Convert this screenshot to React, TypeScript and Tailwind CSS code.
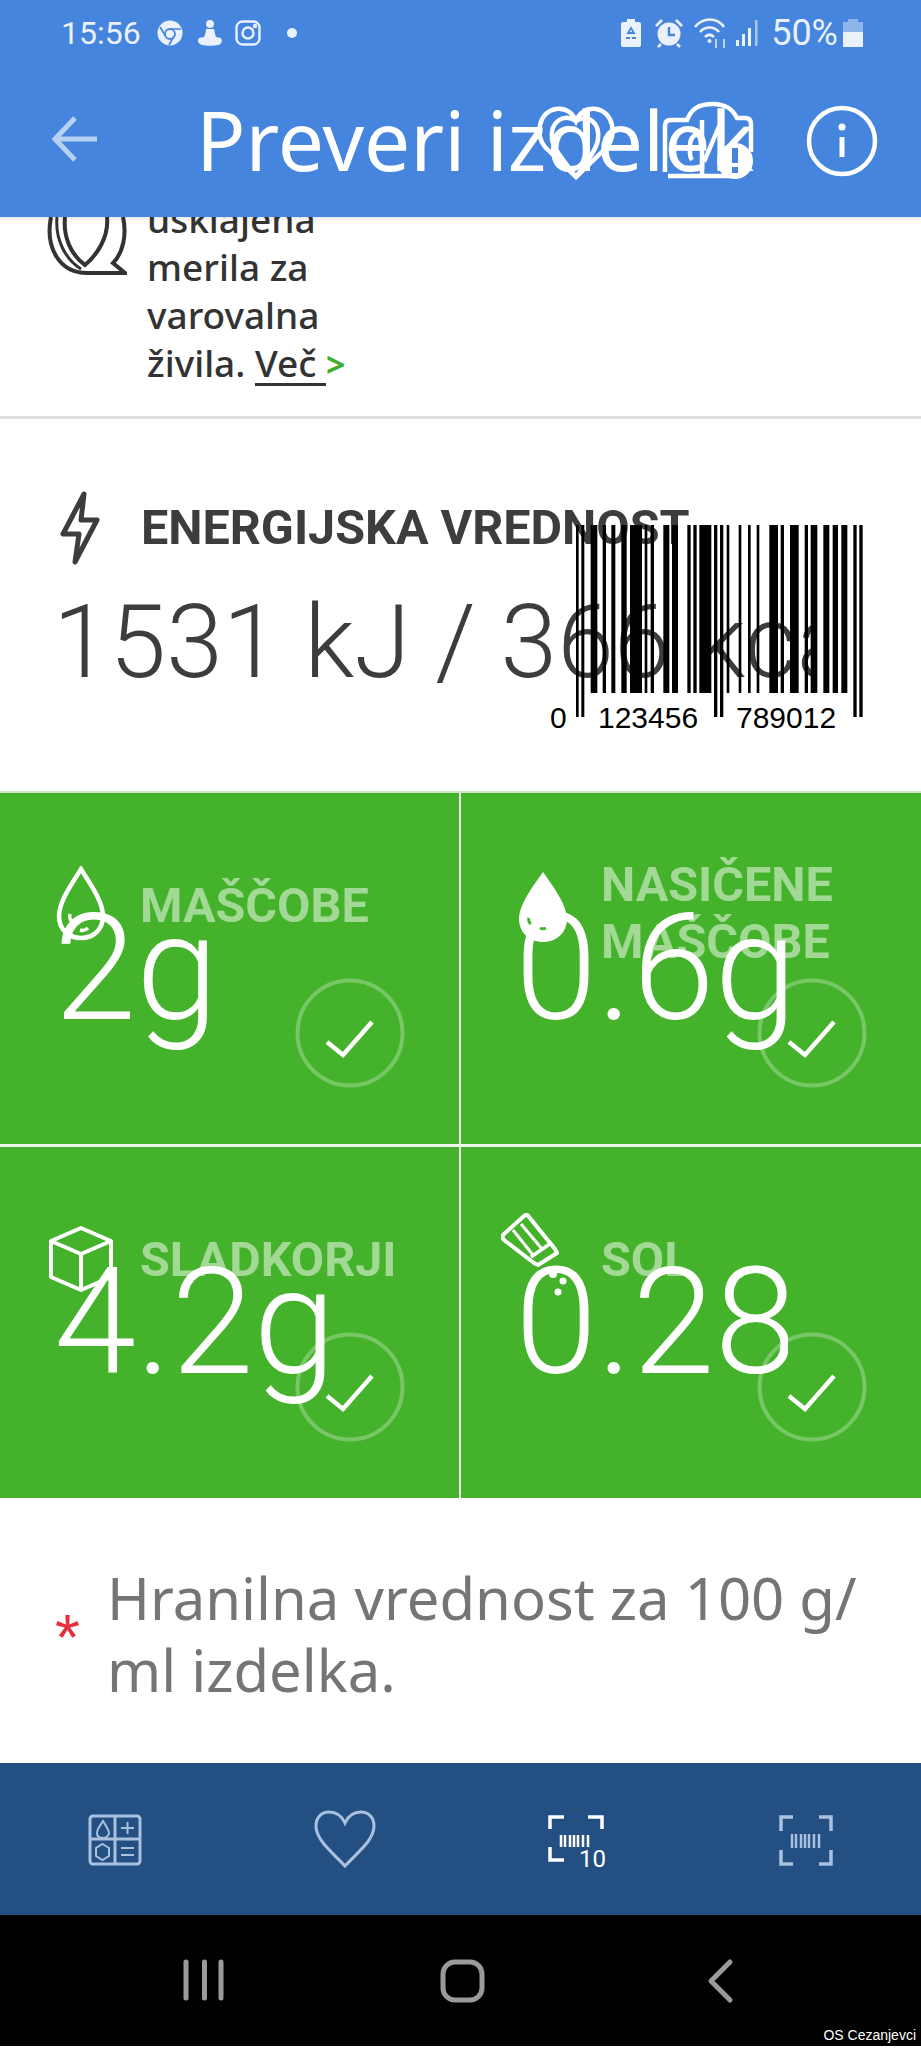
const ROBOTO = "font-['Roboto',sans-serif]";
const NOTO = "font-['Noto_Sans',sans-serif]";

const BARS: [number, number][] = [
  [152, 172], [188, 198], [214, 226], [244, 260], [270, 306], [314, 322], [332, 342],
  [370, 388], [396, 414], [442, 452], [460, 470], [478, 514], [560, 568], [596, 604],
  [624, 632], [650, 658], [688, 714], [722, 732], [750, 776], [794, 804], [812, 832],
  [850, 868], [878, 894], [904, 922],
];
const GUARDS: [number, number][] = [[108, 116], [124, 133], [522, 532], [540, 550], [940, 950], [958, 968]];

const Barcode = () => (
  <div className="absolute left-[540px] top-[525px] w-[340px] h-[215px]">
    <svg width="340" height="192" viewBox="0 0 340 192" className="absolute left-0 top-0">
      {BARS.map(([a, b]) => (
        <rect key={a} x={a / 3} y="0" width={(b - a) / 3} height="168" fill="#000" />
      ))}
      {GUARDS.map(([a, b]) => (
        <rect key={a} x={a / 3} y="0" width={(b - a) / 3} height="192" fill="#000" />
      ))}
    </svg>
    <div className="absolute left-[10px] top-[175px] text-[30px] leading-[36px] text-black font-['Liberation_Sans',sans-serif]">0</div>
    <div className="absolute left-[58px] top-[175px] text-[30px] leading-[36px] text-black font-['Liberation_Sans',sans-serif]">123456</div>
    <div className="absolute left-[196px] top-[175px] text-[30px] leading-[36px] text-black font-['Liberation_Sans',sans-serif]">789012</div>
  </div>
);

const StatusBar = () => (
  <div className={`h-[64px] flex items-center justify-between pl-[61px] pr-[58px] pt-[2px] text-[#EAF1FC] ${ROBOTO}`}>
    <div className="flex items-center">
      <span className="text-[32px] leading-none">15:56</span>
      <svg width="26" height="26" viewBox="0 0 26 26" className="ml-[16px]">
        <circle cx="13" cy="13" r="12.500" fill="#EAF1FC" />
        <circle cx="13" cy="14" r="5" fill="none" stroke="#4585DE" strokeWidth="1.8" />
        <path d="M13 9h11M8.500 16 3 7M17 16l-5 9" stroke="#4585DE" strokeWidth="1.6" fill="none" />
      </svg>
      <svg width="26" height="28" viewBox="0 0 26 28" className="ml-[14px]">
        <circle cx="13" cy="5" r="4" fill="#EAF1FC" />
        <path d="M9 10h8c1 3 1 6 2 8l5 1c2 3 0 7-3 7-3 1-13 1-16 0-4-1-5-5-3-7l5-1c1-2 2-5 2-8z" fill="#EAF1FC" />
      </svg>
      <svg width="26" height="26" viewBox="0 0 26 26" className="ml-[12px]" fill="none" stroke="#EAF1FC" strokeWidth="2.400">
        <rect x="1.500" y="1.500" width="23" height="23" rx="6" />
        <circle cx="13" cy="13" r="5.500" />
        <circle cx="20" cy="6" r="1" fill="#EAF1FC" />
      </svg>
      <span className="ml-[26px] w-[10px] h-[10px] rounded-full bg-[#EAF1FC]" />
    </div>
    <div className="flex items-center">
      <svg width="20" height="28" viewBox="0 0 20 28">
        <path d="M6 0h8v3h4a2 2 0 0 1 2 2v21a2 2 0 0 1-2 2H2a2 2 0 0 1-2-2V5a2 2 0 0 1 2-2h4z" fill="#EAF1FC" />
        <path d="M10 9l3 5h-6zM5 19h4M11 19h4" stroke="#4585DE" strokeWidth="1.8" fill="none" />
      </svg>
      <svg width="30" height="30" viewBox="0 0 30 30" className="ml-[13px]">
        <circle cx="15" cy="16" r="11.500" fill="#EAF1FC" />
        <path d="M15 9v8h6" stroke="#4585DE" strokeWidth="2.400" fill="none" />
        <path d="M2 8 8 2M28 8l-6-6M7 26l-3 3M23 26l3 3" stroke="#EAF1FC" strokeWidth="2.600" />
      </svg>
      <svg width="36" height="32" viewBox="0 0 36 32" className="ml-[10px]" fill="none" stroke="#EAF1FC" strokeWidth="2.600">
        <path d="M1 10C9 0 23 0 30 10M6 15c5-6 14-6 19 0M11 20c3-3 6-3 9 0" />
        <circle cx="15.500" cy="24" r="2" fill="#EAF1FC" stroke="none" />
        <path d="M22 22v9M30 31v-9" stroke="#BBD2F2" strokeWidth="2" />
      </svg>
      <svg width="22" height="28" viewBox="0 0 22 28" className="ml-[6px]">
        <rect x="0" y="21" width="3" height="6" fill="#EAF1FC" />
        <rect x="6" y="15" width="3" height="12" fill="#EAF1FC" />
        <rect x="12" y="9" width="3" height="18" fill="#EAF1FC" />
        <rect x="19" y="1" width="2.500" height="26" fill="#A9C6EE" />
      </svg>
      <span className="ml-[13px] text-[36px] leading-none">50%</span>
      <div className="ml-[5px] w-[20px] h-[28px] flex flex-col items-center">
        <div className="w-[10px] h-[3px] bg-[#8FB4E9]" />
        <div className="w-[20px] h-[10px] bg-[#8FB4E9]" />
        <div className="w-[20px] h-[15px] bg-[#EAF1FC]" />
      </div>
    </div>
  </div>
);

const Toolbar = () => (
  <div className="relative h-[153px] flex items-center pl-[52px]">
    <svg width="46" height="46" viewBox="0 0 46 46" fill="none" stroke="#B7D1F3" strokeWidth="5" className="-mt-[4px]">
      <path d="M23 2 3 23l20 21M3 23h42" />
    </svg>
    <div className={`ml-[98px] w-[560px] -mt-[4px] text-[82px] leading-[100px] whitespace-nowrap text-white overflow-hidden ${NOTO}`}>
      Preveri izdelek
    </div>
    <svg width="80" height="76" viewBox="0 0 80 76" fill="none" stroke="#fff" strokeWidth="4.500" className="absolute left-[536px] top-[41px]">
      <path d="M40 72 9 42C-1 31 2 7 20 4c9-1 16 3 20 12 4-9 11-13 20-12 18 3 21 27 11 38z" />
      <path d="M40 16c-12-8-26 0-24 18 1 10 14 24 24 38" />
      <path d="M40 16c12-8 24 2 22 18-1 10-12 24-22 38" />
    </svg>
    <svg width="96" height="84" viewBox="0 0 96 84" fill="none" stroke="#fff" strokeWidth="4.500" className="absolute left-[660px] top-[36px]">
      <path d="M5 72V26c0-4 2-6 6-6h16c4-10 10-16 26-16 14 0 20 6 24 14h8c4 0 6 2 6 6v28" />
      <path d="M8 76h62" />
      <path d="M42 20v56M60 24 44 62M30 46c0-8 4-12 10-12M32 60c-3-4-2-8-2-14" />
      <circle cx="75" cy="61" r="18" fill="#fff" stroke="none" />
      <rect x="72" y="48" width="6" height="15" fill="#4585DE" stroke="none" />
      <rect x="72" y="67" width="6" height="6" fill="#4585DE" stroke="none" />
    </svg>
    <svg width="72" height="72" viewBox="0 0 72 72" fill="none" stroke="#fff" strokeWidth="4.500" className="absolute left-[806px] top-[41px]">
      <circle cx="36" cy="36" r="33" />
      <path d="M36 32v20" strokeWidth="5" />
      <circle cx="36" cy="22" r="3.500" fill="#fff" stroke="none" />
    </svg>
  </div>
);

const Check = ({ left, top }: { left: number; top: number }) => (
  <svg width="112" height="112" viewBox="0 0 112 112" fill="none" className="absolute" style={{ left, top }}>
    <circle cx="56" cy="56" r="52.500" stroke="#ffffff" strokeOpacity="0.28" strokeWidth="4" />
    <path d="M33 65 49 78 78 45" stroke="#fff" strokeWidth="4.500" />
  </svg>
);

const FatIcon = () => (
  <svg width="50" height="78" viewBox="0 0 50 78" fill="none" stroke="#fff" strokeWidth="4.500">
    <path d="M25 3C20 12 3 34 3 50c0 14 10 22 22 22s22-8 22-22C47 34 30 12 25 3z" />
    <path d="M14 48c-1 4 1 8 4 10M24 64c3 1 6 0 8-2" strokeWidth="3.500" />
  </svg>
);

const SatFatIcon = () => (
  <svg width="50" height="72" viewBox="0 0 50 72" className="mt-[4px]">
    <path d="M25 1C19 10 1 32 1 48c0 14 11 23 24 23s24-9 24-23C49 32 31 10 25 1z" fill="#fff" />
    <path d="M11 47c-1 2 0 5 2 6M22 57c2 1 4 1 6 0" stroke="#44B22B" strokeWidth="3" fill="none" />
  </svg>
);

const CubeIcon = () => (
  <svg width="66" height="66" viewBox="0 0 66 66" fill="none" stroke="#fff" strokeWidth="4" strokeLinejoin="round">
    <path d="M33 2 63 15v36L33 64 3 51V15z" />
    <path d="M3 15l30 13 30-13M33 28v36" />
  </svg>
);

const SaltIcon = () => (
  <svg width="74" height="84" viewBox="0 0 74 84" fill="none" stroke="#fff" strokeWidth="4" strokeLinejoin="round" className="-mt-[8px]">
    <path d="M23 3c2-2 4-1 5 1l26 32 2 4-19 12-4-2L3 27c-2-2-2-4 0-6z" />
    <path d="M30 44 50 30" strokeWidth="3.500" />
    <path d="M12 17 32 42M20 11 41 36" strokeWidth="3" />
    <circle cx="52" cy="61" r="4" fill="#fff" stroke="none" />
    <circle cx="62" cy="68" r="3.500" fill="#fff" stroke="none" />
    <circle cx="57" cy="79" r="3.500" fill="#fff" stroke="none" />
  </svg>
);

const Cell = ({
  icon, label, value, pad, r,
}: { icon: React.ReactNode; label: React.ReactNode; value: string; pad: string; r: boolean }) => (
  <div className={`relative bg-[#44B22B] overflow-hidden ${ROBOTO}`}>
    <div className="h-[224px] flex items-center">
      <div className={`w-[140px] ${pad} flex items-center`}>{icon}</div>
      <div className="text-[48.500px] leading-[57px] font-bold text-white/50">{label}</div>
    </div>
    <div className="absolute left-[54px] top-[76px] w-[273px] overflow-hidden whitespace-nowrap text-[148px] leading-[200px] font-light text-white">
      {value}
    </div>
    <Check left={r ? 295 : 294} top={184} />
  </div>
);

const NavIcons = () => (
  <div className="h-[152px] bg-[#234F83] relative">
    <svg width="54" height="52" viewBox="0 0 54 52" fill="none" stroke="#A9C1DE" strokeWidth="3" className="absolute left-[88px] top-[51px]">
      <rect x="2" y="2" width="50" height="48" rx="3" />
      <path d="M2 25h50M27 2v48" />
      <path d="M15 7c-3 5-6 8-6 12s3 5 6 5 6-2 6-5-3-7-6-12z" strokeWidth="2" />
      <path d="M33 14h13M39.500 8v12" strokeWidth="2" />
      <path d="M14.500 30 21 34v8l-6.500 4L8 42v-8z" strokeWidth="2" />
      <path d="M33 34h13M33 41h13" strokeWidth="2" />
    </svg>
    <svg width="62" height="58" viewBox="0 0 62 58" fill="none" stroke="#A9C1DE" strokeWidth="3" className="absolute left-[314px] top-[47px]">
      <path d="M31 56C18 42 2 30 2 16 2 7 8 2 15 2c7 0 13 4 16 11C34 6 40 2 47 2c7 0 13 5 13 14 0 14-16 26-29 40z" />
    </svg>
    <svg width="56" height="54" viewBox="0 0 56 54" fill="none" stroke="#fff" strokeWidth="3.500" className="absolute left-[548px] top-[50px]">
      <path d="M2 16V4h14M40 4h14v12M2 34v13h14" />
      <path d="M13 22v12M17 22v12M22 22v12M26 22v12M30 22v12M35 22v12M40 22v12" strokeWidth="2.500" />
    </svg>
    <span className="absolute left-[579px] top-[84px] text-white text-[24px] leading-none font-['Roboto',sans-serif]">10</span>
    <svg width="56" height="54" viewBox="0 0 56 54" fill="none" stroke="#A9C1DE" strokeWidth="3.500" className="absolute left-[778px] top-[51px]">
      <path d="M3 17V3h12M41 3h12v14M3 36v14h12M41 50h12V36" />
      <path d="M14 20v14M18 20v14M23 20v14M27 20v14M31 20v14M36 20v14M41 20v14" strokeWidth="2.500" />
    </svg>
  </div>
);

const App = () => {
  return (
    <div className="relative w-[921px] h-[2048px] overflow-hidden bg-white flex flex-col">
      <div className="h-[217px] bg-[#4585DE] shadow-[0_2px_3px_rgba(0,0,0,0.1)] z-10">
        <StatusBar />
        <Toolbar />
      </div>

      <div className={`h-[202px] border-b-[3px] border-[#DDDDDD] overflow-hidden flex pl-[47px] ${NOTO}`}>
        <svg width="80" height="62" viewBox="0 0 80 62" fill="none" stroke="#333" strokeWidth="4" className="shrink-0">
          <path d="M4 0C-2 30 12 56 40 56h38L66 46C76 36 80 18 76 0" />
          <path d="M18 0c-2 20 6 38 20 48C50 38 62 20 60 0" />
          <path d="M10 0c-2 22 8 42 24 52" strokeWidth="3" />
        </svg>
        <div className="ml-[20px] -mt-[22px] text-[37px] leading-[48px] font-medium text-[#333]">
          <div>usklajena</div>
          <div>merila za</div>
          <div>varovalna</div>
          <div>
            živila. <span className="underline underline-offset-[6px]">Več </span>
            <span className="text-[#3FAE2A] font-bold text-[34px]">&gt;</span>
          </div>
        </div>
      </div>

      <div className={`h-[374px] pl-[60px] pt-[72px] ${ROBOTO} text-[#3D3D3D]`}>
        <div className="flex items-center">
          <svg width="40" height="74" viewBox="0 0 40 74" fill="none" stroke="#3D3D3D" strokeWidth="5" strokeLinejoin="round">
            <path d="M24 3 3 43h16l-4 28 22-42H21z" />
          </svg>
          <div className="ml-[41px] text-[48.500px] font-bold leading-none whitespace-nowrap">ENERGIJSKA VREDNOST</div>
        </div>
        <div className="mt-[26px] w-[764px] overflow-hidden whitespace-nowrap text-[102px] leading-none font-light -ml-[7px]">
          1531 kJ / 366 kcal
        </div>
      </div>

      <div className="h-[706px] border-t-[2px] border-[#CFE5C9] grid grid-cols-[459px_460px] grid-rows-[351px_351px] gap-x-[2px] gap-y-[3px] bg-[#F1F8EF] box-border -mt-[2px] border-b-[2px]">
        <Cell icon={<FatIcon />} label="MAŠČOBE" value="2g" pad="pl-[56px]" r={false} />
        <Cell icon={<SatFatIcon />} label={<div className="pt-[16px]">NASIČENE<br />MAŠČOBE</div>} value="0.6g" pad="pl-[57px]" r />
        <Cell icon={<CubeIcon />} label="SLADKORJI" value="4.2g" pad="pl-[48px]" r={false} />
        <Cell icon={<SaltIcon />} label="SOL" value="0.28" pad="pl-[40px]" r />
      </div>

      <div className={`h-[266px] flex items-center pl-[55px] pt-[8px] ${NOTO}`}>
        <span className="text-[#E5303C] text-[64px] leading-none mt-[8px] font-['Liberation_Sans',sans-serif]">*</span>
        <div className="ml-[27px] w-[790px] text-[58px] leading-[72px] text-[#757575]">
          Hranilna vrednost za 100 g/ ml izdelka.
        </div>
      </div>

      <NavIcons />

      <div className="relative h-[131px] bg-black">
        <svg width="921" height="131" viewBox="0 0 921 131" fill="none" stroke="#9A9A9A" strokeWidth="5" strokeLinecap="round">
          <path d="M186 47v36M204.500 47v36M221 47v36" />
          <rect x="443" y="47" width="39" height="38" rx="12" />
          <path d="M730 47 711 66l19 19" strokeWidth="5" strokeLinejoin="round" />
        </svg>
        <span className="absolute right-[5px] bottom-[3px] text-white text-[14px] leading-[16px] font-['Liberation_Sans',sans-serif]">OS Cezanjevci</span>
      </div>

      <Barcode />
    </div>
  );
};

export default App;
